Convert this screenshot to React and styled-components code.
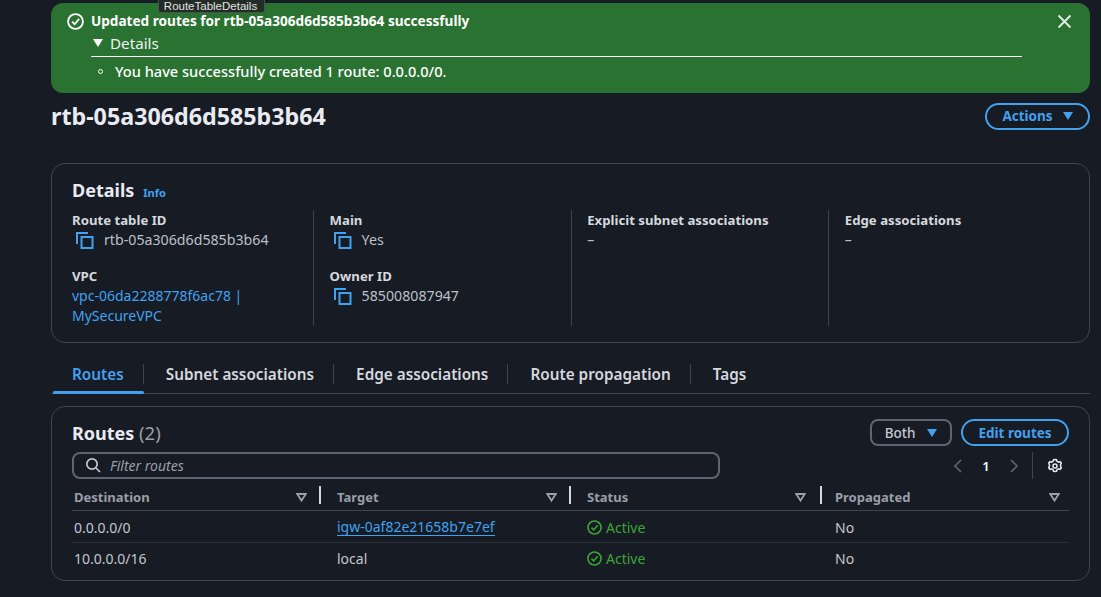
import React from "react";
import styled, { createGlobalStyle } from "styled-components";

const Global = createGlobalStyle`
  html, body { margin: 0; padding: 0; background: #161b24; height: 100%; overflow: hidden; }
  body { font-family: "Noto Sans", "Open Sans", sans-serif; font-size: 14px; color: #d1d5db; }
  * { box-sizing: border-box; }
`;

const Page = styled.div`
  position: relative;
  width: 1101px;
  height: 597px;
  padding: 3px 11px 0 51px;
  display: flex;
  flex-direction: column;
`;

const Tooltip = styled.div`
  position: absolute;
  left: 158px;
  top: -6px;
  width: 107px;
  height: 19px;
  padding: 5px 2px 0 0;
  background: #232b26;
  border: 1px solid #4a524c;
  border-radius: 3px;
  font: 11.5px/12px "Liberation Sans", sans-serif;
  color: #e0e4e0;
  text-align: center;
`;

const Flash = styled.section`
  height: 90px;
  background: #2a7231;
  border-radius: 12px;
  padding: 9px 16px 0 16px;
  display: flex;
  color: #fff;
`;
const FlashBody = styled.div`
  width: 931px;
  margin-left: 7px;
`;
const FlashTitle = styled.div`
  font-size: 13.6px;
  line-height: 18px;
  font-weight: 700;
`;
const Summary = styled.div`
  display: flex;
  align-items: center;
  height: 27px;
  border-bottom: 1px solid #fff;
  font-size: 15.2px;
  color: #f0f4f0;
`;
const Tri = styled.span`
  width: 0;
  height: 0;
  flex: none;
  border-left: 5.5px solid transparent;
  border-right: 5.5px solid transparent;
  border-top: 8px solid ${(p) => p.$color || "#fff"};
`;
const SummaryTri = styled(Tri)`
  margin: 0 7px 0 2px;
`;
const FlashItem = styled.div`
  display: flex;
  align-items: center;
  height: 28px;
  padding-left: 7px;
  font-size: 14.6px;
  font-weight: 500;
`;
const Bullet = styled.span`
  width: 5px;
  height: 5px;
  margin-right: 12px;
  border: 1px solid #fff;
  border-radius: 50%;
`;
const CloseIcon = styled.svg`
  width: 15px;
  height: 15px;
  margin: 2px 2px 0 auto;
`;

const Header = styled.header`
  height: 70px;
  padding-top: 10px;
  display: flex;
  justify-content: space-between;
  align-items: flex-start;
`;
const Title = styled.h1`
  margin: 0;
  height: 27px;
  font-size: 23.25px;
  line-height: 27px;
  font-weight: 700;
  color: #e9ebf0;
`;
const PillButton = styled.button`
  display: flex;
  align-items: center;
  justify-content: center;
  gap: ${(p) => (p.$muted ? 12 : 10)}px;
  width: ${(p) => p.$w}px;
  height: 27px;
  padding: 0 0 1px;
  background: transparent;
  border: 2px solid ${(p) => (p.$muted ? "#5f6673" : "#42a2f0")};
  border-radius: ${(p) => (p.$muted ? "8px" : "14px")};
  color: ${(p) => (p.$muted ? "#c6cad0" : "#42a2f0")};
  font: ${(p) => (p.$muted ? 500 : 700)} 13.5px "Noto Sans", sans-serif;
`;

const Card = styled.section`
  border: 1px solid #3f4550;
  border-radius: 14px;
  background: #161b24;
`;
const DetailsCard = styled(Card)`
  height: 180px;
  padding: 13px 20px 0 20px;
`;
const CardHead = styled.div`
  display: flex;
  align-items: baseline;
  gap: 9px;
  height: 27px;
`;
const H2 = styled.h2`
  margin: 0;
  font-size: 18px;
  line-height: 27px;
  font-weight: 700;
  color: #e9ebf0;
`;
const Info = styled.span`
  font-size: 11px;
  font-weight: 700;
  color: #42a2f0;
`;
const Columns = styled.div`
  display: grid;
  grid-template-columns: 242px 242px 242px 1fr;
  column-gap: 15.6px;
  margin-top: 6px;
  height: 116px;
`;
const Column = styled.div`
  border-right: ${(p) => (p.$last ? "none" : "1px solid #3f4550")};
`;
const Field = styled.div`
  margin-bottom: 16px;
`;
const Label = styled.div`
  font-size: 13.2px;
  line-height: 20px;
  font-weight: 700;
  color: #d5d8dd;
`;
const Value = styled.div`
  display: flex;
  align-items: center;
  height: 20px;
  font-size: 14.2px;
  line-height: 20px;
  color: #bcc0c7;
`;
const CopySvg = styled.svg`
  width: 18px;
  height: 18px;
  margin: 0 10px 0 4px;
  flex: none;
`;
const Link = styled.div`
  font-size: 14px;
  line-height: 20px;
  color: #42a2f0;
  width: 200px;
`;

const Tabs = styled.nav`
  margin-top: 15px;
  height: 36px;
  padding-left: 2px;
  border-bottom: 1px solid #3f4550;
  display: flex;
  align-items: flex-start;
`;
const Tab = styled.div`
  position: relative;
  height: 35px;
  padding: 6px ${(p) => p.$pr ?? 20}px 0 ${(p) => p.$pl ?? 22}px;
  font-size: 15.3px;
  line-height: 20px;
  font-weight: 600;
  white-space: nowrap;
  color: ${(p) => (p.$active ? "#42a2f0" : "#d5d8dd")};
  &::after {
    content: "";
    display: ${(p) => (p.$last ? "none" : "block")};
    position: absolute;
    right: 0;
    top: 6px;
    height: 20px;
    width: 1px;
    background: #3f4550;
  }
  &::before {
    content: "";
    display: ${(p) => (p.$active ? "block" : "none")};
    position: absolute;
    left: 0;
    right: 0;
    bottom: -1px;
    height: 3px;
    border-radius: 2px;
    background: #42a2f0;
  }
`;

const RoutesCard = styled(Card)`
  margin-top: 12px;
  height: 175px;
  padding: 12px 20px 0 20px;
`;
const RoutesHead = styled.div`
  display: flex;
  justify-content: space-between;
  height: 33px;
`;
const Count = styled.span`
  font-weight: 400;
  font-size: 18.5px;
  color: #9a9fa8;
`;
const Actions = styled.div`
  display: flex;
  gap: 9px;
  & > button { padding-bottom: 0; }
`;
const FilterRow = styled.div`
  display: flex;
  justify-content: space-between;
  align-items: center;
  height: 27px;
`;
const FilterBox = styled.div`
  width: 648px;
  height: 27px;
  padding: 0 0 1px 11px;
  border: 2px solid #5f6673;
  border-radius: 8px;
  display: flex;
  align-items: center;
  gap: 9px;
  font-size: 14px;
  font-style: italic;
  color: #9a9fa8;
`;
const Pager = styled.div`
  display: flex;
  align-items: center;
  height: 27px;
  margin-right: 6px;
  color: #fff;
  font-size: 13px;
  font-weight: 600;
`;
const PageNum = styled.span`
  width: 46px;
  text-align: center;
`;
const PagerSep = styled.span`
  width: 1px;
  height: 27px;
  margin: 0 14px 0 13px;
  background: #3f4550;
`;
const Table = styled.div`
  display: grid;
  grid-template-columns: 248px 250px 250px 249px;
`;
const Th = styled.div`
  position: relative;
  height: 32px;
  padding: 8px 0 0 ${(p) => p.$pl}px;
  border-bottom: 1px solid #3f4550;
  font-size: 13px;
  line-height: 20px;
  font-weight: 700;
  color: #9a9fa8;
  display: flex;
  justify-content: space-between;
`;
const SortTri = styled.svg`
  width: 11px;
  height: 9px;
  margin: 6px ${(p) => p.$mr}px 0 0;
`;
const Resizer = styled.span`
  position: absolute;
  right: ${(p) => p.$r}px;
  top: 7px;
  width: 2px;
  height: 18px;
  background: #d5d8dd;
`;
const Td = styled.div`
  display: flex;
  align-items: center;
  height: ${(p) => (p.$end ? 31 : 32)}px;
  padding-top: ${(p) => (p.$end ? 0 : 1)}px;
  padding-left: ${(p) => p.$pl}px;
  border-bottom: ${(p) => (p.$end ? "none" : "1px solid #2c323c")};
  font-size: 14px;
  color: #c3c7cd;
`;
const TargetLink = styled.span`
  color: #42a2f0;
  border-bottom: 1px solid #42a2f0;
  line-height: 17px;
`;
const Status = styled.span`
  display: flex;
  align-items: center;
  gap: 4px;
  color: #3ba635;
`;

const CheckCircle = ({ color, size, className }) => (
  <svg className={className} width={size} height={size} viewBox="0 0 16 16" fill="none" stroke={color} strokeWidth="1.7">
    <circle cx="8" cy="8" r="7" />
    <path d="M4.8 8.2 7.2 10.6 11.4 5.6" />
  </svg>
);
const FlashIcon = styled(CheckCircle)`
  flex: none;
  margin-top: 1px;
`;
const Copy = () => (
  <CopySvg viewBox="0 0 18 18" fill="none" stroke="#42a2f0" strokeWidth="2">
    <path d="M1 13V2h11" />
    <rect x="5.5" y="6" width="11" height="11" />
  </CopySvg>
);
const FilterTri = ({ mr }) => (
  <SortTri $mr={mr} viewBox="0 0 11 9" fill="none" stroke="#9a9fa8" strokeWidth="1.8">
    <path d="M1.2 1h8.6L5.5 7.6z" />
  </SortTri>
);

export default function App() {
  return (
    <Page>
      <Global />
      <Tooltip>RouteTableDetails</Tooltip>
      <Flash>
        <FlashIcon color="#fff" size={17} />
        <FlashBody>
          <FlashTitle>Updated routes for rtb-05a306d6d585b3b64 successfully</FlashTitle>
          <Summary>
            <SummaryTri />
            Details
          </Summary>
          <FlashItem>
            <Bullet />
            You have successfully created 1 route: 0.0.0.0/0.
          </FlashItem>
        </FlashBody>
        <CloseIcon viewBox="0 0 15 15" fill="none" stroke="#e6ebe6" strokeWidth="1.8">
          <path d="M1.5 1.5l12 12M13.5 1.5l-12 12" />
        </CloseIcon>
      </Flash>

      <Header>
        <Title>rtb-05a306d6d585b3b64</Title>
        <PillButton $w={105}>
          Actions
          <Tri $color="#42a2f0" />
        </PillButton>
      </Header>

      <DetailsCard>
        <CardHead>
          <H2>Details</H2>
          <Info>Info</Info>
        </CardHead>
        <Columns>
          <Column>
            <Field>
              <Label>Route table ID</Label>
              <Value>
                <Copy />
                rtb-05a306d6d585b3b64
              </Value>
            </Field>
            <Label>VPC</Label>
            <Link>vpc-06da2288778f6ac78 | MySecureVPC</Link>
          </Column>
          <Column>
            <Field>
              <Label>Main</Label>
              <Value>
                <Copy />
                Yes
              </Value>
            </Field>
            <Label>Owner ID</Label>
            <Value>
              <Copy />
              585008087947
            </Value>
          </Column>
          <Column>
            <Label>Explicit subnet associations</Label>
            <Value>–</Value>
          </Column>
          <Column $last>
            <Label>Edge associations</Label>
            <Value>–</Value>
          </Column>
        </Columns>
      </DetailsCard>

      <Tabs>
        <Tab $active $pl={19} $pr={20}>Routes</Tab>
        <Tab>Subnet associations</Tab>
        <Tab>Edge associations</Tab>
        <Tab>Route propagation</Tab>
        <Tab $last>Tags</Tab>
      </Tabs>

      <RoutesCard>
        <RoutesHead>
          <H2>
            Routes <Count>(2)</Count>
          </H2>
          <Actions>
            <PillButton $muted $w={82}>
              Both
              <Tri $color="#42a2f0" />
            </PillButton>
            <PillButton $w={108}>Edit routes</PillButton>
          </Actions>
        </RoutesHead>
        <FilterRow>
          <FilterBox>
            <svg width="16" height="16" viewBox="0 0 16 16" fill="none" stroke="#c3c7cd" strokeWidth="1.7">
              <circle cx="7" cy="7" r="5.2" />
              <path d="M11 11l4 4" />
            </svg>
            Filter routes
          </FilterBox>
          <Pager>
            <svg width="10" height="16" viewBox="0 0 10 16" fill="none" stroke="#5f6673" strokeWidth="1.6">
              <path d="M8 2 2 8l6 6" />
            </svg>
            <PageNum>1</PageNum>
            <svg width="10" height="16" viewBox="0 0 10 16" fill="none" stroke="#5f6673" strokeWidth="1.6">
              <path d="M2 2l6 6-6 6" />
            </svg>
            <PagerSep />
            <svg width="16" height="16" viewBox="0 0 24 24" fill="none" stroke="#e4e6ea" strokeWidth="2.4">
              <path d="M12 2.2l2.2.3.7 2.5 2.2 1.2 2.5-.7 1.7 2 -.9 2.6v2.4l1 2.3-1.8 2.1-2.5-.7-2.2 1.3-.7 2.4-2.2.3-2.2-.3-.7-2.4-2.2-1.3-2.5.7-1.8-2.1 1-2.3v-2.4l-.9-2.6 1.7-2 2.5.7 2.2-1.2.7-2.5z" />
              <circle cx="12" cy="12" r="3" />
            </svg>
          </Pager>
        </FilterRow>
        <Table>
          <Th $pl={2}>Destination<FilterTri mr={13} /><Resizer $r={-1} /></Th>
          <Th $pl={17}>Target<FilterTri mr={13} /><Resizer $r={-1} /></Th>
          <Th $pl={17}>Status<FilterTri mr={14} /><Resizer $r={-2} /></Th>
          <Th $pl={15}>Propagated<FilterTri mr={9} /></Th>

          <Td $pl={2}>0.0.0.0/0</Td>
          <Td $pl={17}><TargetLink>igw-0af82e21658b7e7ef</TargetLink></Td>
          <Td $pl={17}><Status><CheckCircle color="#3ba635" size={15} />Active</Status></Td>
          <Td $pl={15}>No</Td>

          <Td $pl={2} $end>10.0.0.0/16</Td>
          <Td $pl={17} $end>local</Td>
          <Td $pl={17} $end><Status><CheckCircle color="#3ba635" size={15} />Active</Status></Td>
          <Td $pl={15} $end>No</Td>
        </Table>
      </RoutesCard>
    </Page>
  );
}
